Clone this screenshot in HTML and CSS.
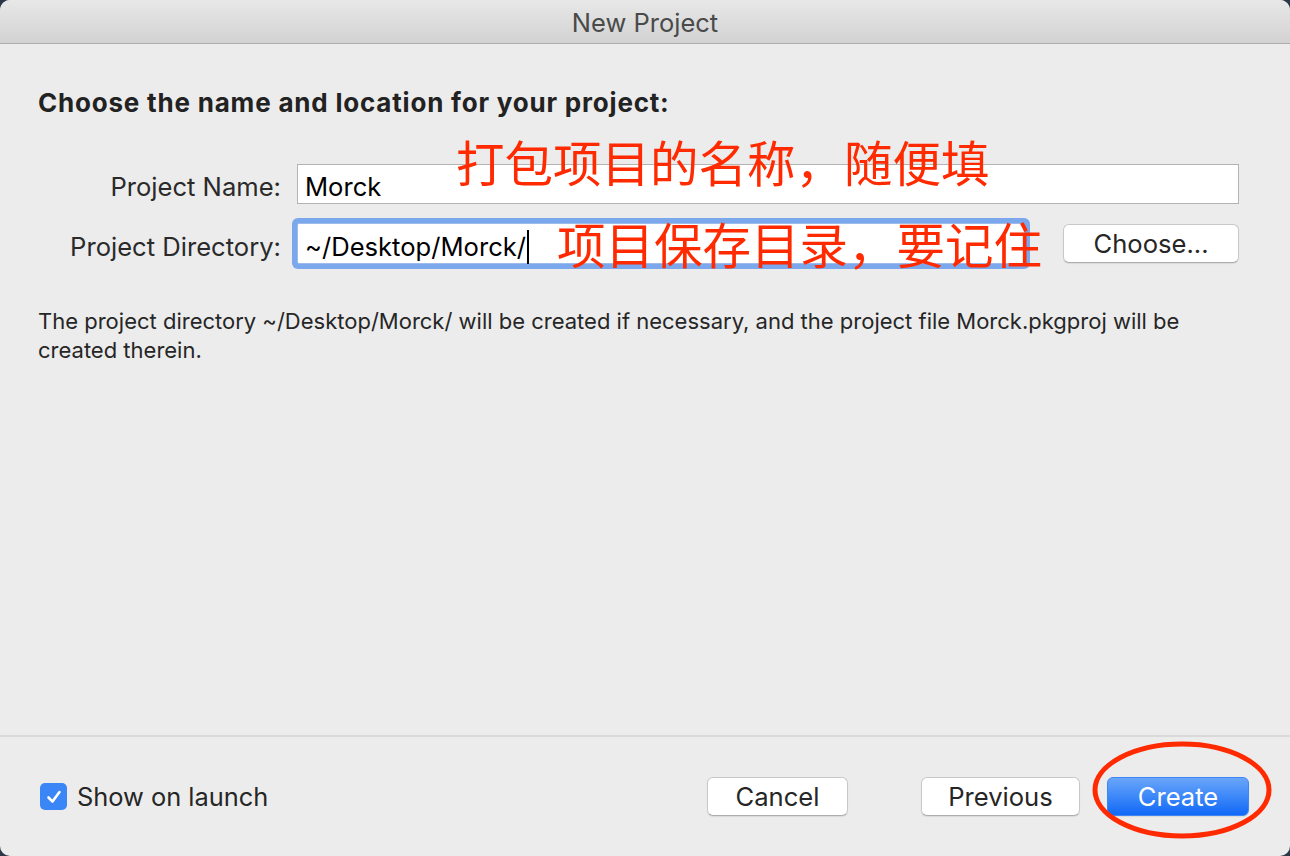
FILE: index.html
```html
<!DOCTYPE html>
<html lang="en">
<head>
    <meta charset="UTF-8">
    <title>New Project</title>
    <link rel="stylesheet" href="styles.css">
</head>
<body>
    <div class="window">
        <header class="titlebar">New Project</header>

        <main class="content">
            <h1 class="heading">Choose the name and location for your project:</h1>

            <div class="form">
                <label class="label">Project Name:</label>
                <div class="field">Morck</div>

                <label class="label">Project Directory:</label>
                <div class="row">
                    <div class="field focused">~/Desktop/Morck/<span class="caret"></span></div>
                    <button class="btn choose">Choose...</button>
                </div>
            </div>

            <p class="info">The project directory ~/Desktop/Morck/ will be created if necessary, and the project file Morck.pkgproj will be created therein.</p>
        </main>

        <footer class="footer">
            <div class="check">
                <span class="box">
                    <svg width="18" height="18" viewBox="0 0 18 18"><path d="M3.5 9.5 L7.5 13.5 L14.5 4" fill="none" stroke="#fff" stroke-width="2.6" stroke-linecap="round" stroke-linejoin="round"/></svg>
                </span>
                <span>Show on launch</span>
            </div>
            <div class="actions">
                <button class="btn cancel">Cancel</button>
                <button class="btn previous">Previous</button>
                <button class="btn primary">Create</button>
            </div>
        </footer>

        <!-- annotations drawn on top of the dialog -->
        <div class="note note-name">打包项目的名称，随便填</div>
        <div class="note note-dir">项目保存目录，要记住</div>
        <svg class="circle" width="180" height="98" viewBox="0 0 180 98">
            <ellipse cx="90" cy="49" rx="87" ry="46" fill="none" stroke="#ff2a00" stroke-width="5"/>
        </svg>
    </div>
</body>
</html>
```

FILE: styles.css
```css
html, body{
    margin: 0;
    padding: 0;
    background: #2a3848;
}
body{
    font-family: "Inter", "Noto Sans CJK SC", sans-serif;
    color: #262626;
}
.window{
    position: relative;
    width: 1290px;
    height: 856px;
    background: #ececec;
    border-radius: 10px;
    overflow: hidden;
    display: flex;
    flex-direction: column;
}
.titlebar{
    height: 43px;
    line-height: 46px;
    text-align: center;
    font-size: 25.5px;
    color: #4a4a4a;
    background: linear-gradient(#e8e8e8, #d2d2d2);
    border-bottom: 1px solid #acacac;
}
.content{
    flex: 1;
    padding: 44px 38px 0;
}
.heading{
    margin: 0;
    font-size: 26px;
    line-height: 30px;
    font-weight: 700;
    letter-spacing: 0.8px;
    color: #222;
}
.form{
    display: grid;
    grid-template-columns: 243px 1fr;
    column-gap: 16px;
    row-gap: 13px;
    align-items: center;
    margin-top: 46px;
    margin-right: 13px;
}
.label{
    padding-top: 5px;
    text-align: right;
    font-size: 25.6px;
    color: #2a2a2a;
}
.field{
    height: 38px;
    line-height: 44px;
    padding: 0 7px;
    font-size: 25.6px;
    color: #000;
    background: #fff;
    border: 1px solid #b3b3b3;
}
.row{
    display: flex;
    align-items: center;
}
.field.focused{
    flex: 1;
    height: 39px;
    line-height: 46px;
    margin: 6px 38px 6px 0;
    border-color: #9dbcec;
    box-shadow: 0 0 0 5px #7ba8ec;
    border-radius: 2px;
}
.caret{
    display: inline-block;
    width: 2px;
    height: 34px;
    margin-left: 1px;
    background: #000;
    vertical-align: -8px;
}
.btn{
    height: 39px;
    padding: 0;
    font-family: inherit;
    font-size: 25.6px;
    color: #262626;
    background: #fff;
    border: 1px solid #c8c8c8;
    border-bottom-color: #adadad;
    border-radius: 6px;
    box-shadow: 0 1px 1px rgba(0,0,0,0.08);
}
.choose{
    width: 176px;
}
.info{
    margin: 37px 0 0;
    font-size: 22px;
    line-height: 29px;
    color: #262626;
}
.footer{
    height: 119px;
    border-top: 2px solid #d9d9d9;
    display: flex;
    align-items: center;
    padding: 0 41px 0 40px;
}
.check{
    display: flex;
    align-items: center;
    gap: 10px;
    font-size: 25.4px;
    color: #262626;
}
.box{
    width: 27px;
    height: 27px;
    border-radius: 5px;
    background: #3b86f7;
    display: flex;
    align-items: center;
    justify-content: center;
}
.actions{
    margin-left: auto;
    display: flex;
    align-items: center;
}
.cancel{
    width: 141px;
}
.previous{
    width: 159px;
    margin-left: 73px;
}
.primary{
    width: 142px;
    margin-left: 27px;
    color: #fff;
    border: 1px solid #3d86f6;
    background: linear-gradient(#69a6fa, #1169f7);
}
.note{
    position: absolute;
    font-family: "Noto Sans CJK SC", sans-serif;
    font-size: 48.5px;
    line-height: 48px;
    color: #ff2a00;
    white-space: nowrap;
}
.note-name{
    left: 456px;
    top: 137px;
}
.note-dir{
    left: 557px;
    top: 219px;
}
.circle{
    position: absolute;
    left: 1092px;
    top: 741px;
}
```
